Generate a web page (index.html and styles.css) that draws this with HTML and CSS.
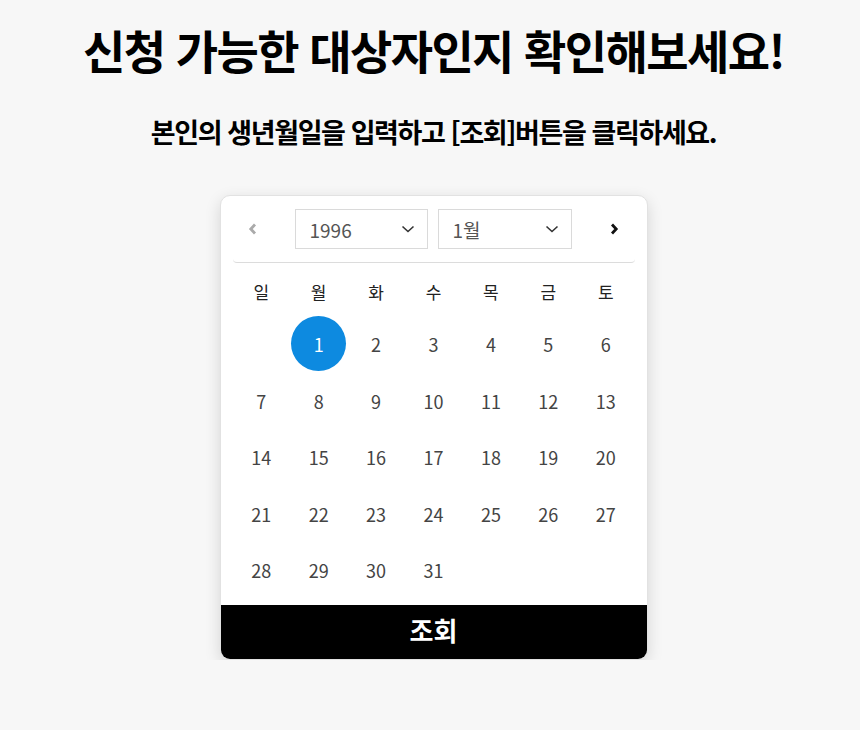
FILE: index.html
```html
<!DOCTYPE html>
<html lang="ko">
<head>
<meta charset="utf-8">
<title>대상자 확인</title>
<link rel="stylesheet" href="styles.css">
</head>
<body>
<main class="page">
  <h1 class="title">신청 가능한 대상자인지 확인해보세요!</h1>
  <p class="subtitle">본인의 생년월일을 입력하고 [조회]버튼을 클릭하세요.</p>
  <section class="card">
    <div class="cal-head">
      <button class="nav prev" aria-label="이전 달">
        <svg width="10" height="12" viewBox="0 0 10 12"><path d="M7 1.5 L2.8 6 L7 10.5" fill="none" stroke="#aaa" stroke-width="2.8" stroke-linejoin="miter"/></svg>
      </button>
      <div class="select year"><span>1996</span>
        <svg class="chev" width="14" height="8" viewBox="0 0 14 8"><path d="M1.5 1.5 L7 6.5 L12.5 1.5" fill="none" stroke="#333" stroke-width="1.6"/></svg>
      </div>
      <div class="select month"><span>1월</span>
        <svg class="chev" width="14" height="8" viewBox="0 0 14 8"><path d="M1.5 1.5 L7 6.5 L12.5 1.5" fill="none" stroke="#333" stroke-width="1.6"/></svg>
      </div>
      <button class="nav next" aria-label="다음 달">
        <svg width="10" height="12" viewBox="0 0 10 12"><path d="M3 1.5 L7.2 6 L3 10.5" fill="none" stroke="#111" stroke-width="2.8" stroke-linejoin="miter"/></svg>
      </button>
    </div>
    <div class="weekdays">
      <span>일</span><span>월</span><span>화</span><span>수</span><span>목</span><span>금</span><span>토</span>
    </div>
    <div class="days">
      <span class="empty"></span>
      <span class="day selected">1</span><span class="day">2</span><span class="day">3</span><span class="day">4</span><span class="day">5</span><span class="day">6</span>
      <span class="day">7</span><span class="day">8</span><span class="day">9</span><span class="day">10</span><span class="day">11</span><span class="day">12</span><span class="day">13</span>
      <span class="day">14</span><span class="day">15</span><span class="day">16</span><span class="day">17</span><span class="day">18</span><span class="day">19</span><span class="day">20</span>
      <span class="day">21</span><span class="day">22</span><span class="day">23</span><span class="day">24</span><span class="day">25</span><span class="day">26</span><span class="day">27</span>
      <span class="day">28</span><span class="day">29</span><span class="day">30</span><span class="day">31</span>
    </div>
    <button class="submit">조회</button>
  </section>
</main>
</body>
</html>
```
FILE: styles.css
```css
* { box-sizing: border-box; }
html, body {
  margin: 0;
  padding: 0;
  background: #f7f7f7;
  font-family: "Noto Sans CJK KR", "Noto Sans", sans-serif;
}
.page {
  display: flex;
  flex-direction: column;
  align-items: center;
  padding: 19px 0 0 7px;
}
.title {
  margin: 0;
  font-size: 46px;
  font-weight: 700;
  letter-spacing: -1.6px;
  line-height: 60px;
  color: #000;
}
.subtitle {
  margin: 35px 0 0;
  font-size: 27px;
  font-weight: 700;
  letter-spacing: -1.4px;
  line-height: 36px;
  color: #000;
}
.card {
  margin-top: 45px;
  width: 428px;
  background: #fff;
  border-radius: 10px;
  box-shadow: 0 5px 16px rgba(0,0,0,0.14);
  border: 1px solid #e2e2e2;
  overflow: hidden;
  display: flex;
  flex-direction: column;
}
.cal-head {
  margin: 0 12px;
  padding: 13px 0 13px;
  display: flex;
  align-items: center;
  border-bottom: 1px solid #dcdcdc;
  border-radius: 0 0 4px 4px;
}
.nav {
  width: 40px;
  height: 40px;
  border: 0;
  background: none;
  padding: 0;
  display: flex;
  align-items: center;
  justify-content: center;
  cursor: pointer;
}
.prev { margin-right: 22px; }
.next { margin-left: 22px; }
.select {
  height: 40px;
  border: 1px solid #dadada;
  display: flex;
  align-items: center;
  justify-content: space-between;
  padding: 0 12px 0 14px;
  font-size: 19px;
  color: #555;
}
.year { width: 133px; }
.month { width: 134px; margin-left: 10px; }
.chev { display: block; }
.weekdays {
  margin: 0 12px;
  padding-top: 17px;
  display: grid;
  grid-template-columns: repeat(7, 1fr);
  font-size: 17px;
  line-height: 24px;
  color: #222;
  text-align: center;
}
.days {
  margin: 12px 12px 0;
  display: grid;
  grid-template-columns: repeat(7, 1fr);
  grid-auto-rows: 56.5px;
  font-size: 18px;
  color: #444;
}
.day {
  display: flex;
  align-items: center;
  justify-content: center;
}
.selected {
  width: 55px;
  height: 55px;
  border-radius: 50%;
  background: #0d8ae0;
  color: #fff;
  justify-self: center;
}
.submit {
  margin-top: 6px;
  height: 54px;
  padding: 0 0 4px;
  border: 0;
  background: #000;
  color: #fff;
  font-family: inherit;
  font-size: 26px;
  font-weight: 700;
  cursor: pointer;
}
```
